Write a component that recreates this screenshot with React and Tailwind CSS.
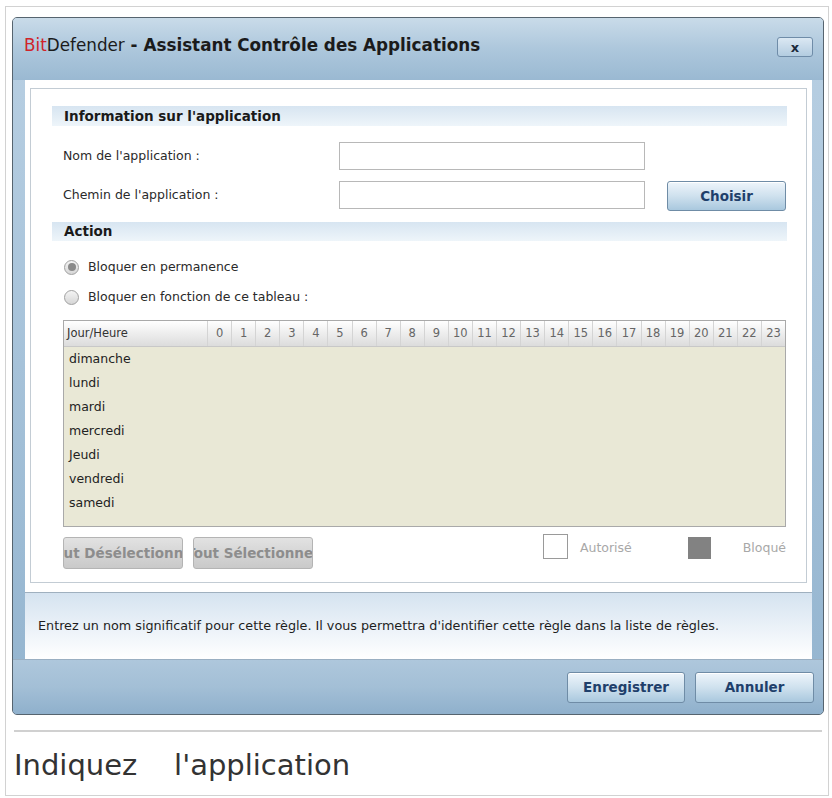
import React from 'react';

const days = ['dimanche', 'lundi', 'mardi', 'mercredi', 'Jeudi', 'vendredi', 'samedi'];
const hours = Array.from({ length: 24 }, (_, i) => i);

function BlueButton({ children, className = '' }) {
  return (
    <button
      className={
        'flex items-center justify-center rounded-[3px] border border-[#6f8ca6] bg-gradient-to-b from-[#eef5fb] via-[#cfe1ee] to-[#a9c8de] text-[13.5px] font-bold text-[#1f3f6b] shadow-[inset_0_1px_0_#ffffff] ' +
        className
      }
    >
      {children}
    </button>
  );
}

function GrayButton({ children }) {
  return (
    <div className="flex h-[32px] w-[120px] items-center justify-center overflow-hidden whitespace-nowrap rounded-[3px] border border-[#b4b4b4] bg-gradient-to-b from-[#e2e2e2] to-[#c9c9c9] text-[13.5px] font-bold text-[#8d8d8d]">
      {children}
    </div>
  );
}

function SectionHeader({ children, className = '' }) {
  return (
    <div
      className={
        'ml-[21px] mr-[19px] flex items-center bg-gradient-to-b from-[#d7e5f1] to-[#eef5fa] pl-[12px] text-[13.5px] font-bold text-[#1a1a1a] ' +
        className
      }
    >
      {children}
    </div>
  );
}

function Radio({ checked, label }) {
  return (
    <div className="flex h-[20px] items-center pl-[33px]">
      <div className="flex h-[15px] w-[15px] items-center justify-center rounded-full border border-[#a0a0a0] bg-gradient-to-b from-[#f4f4f4] to-[#d6d6d6]">
        {checked && <div className="h-[8px] w-[8px] rounded-full bg-[#8a8a8a]" />}
      </div>
      <span className="ml-[9px] text-[12.5px] text-[#2a2a2a]">{label}</span>
    </div>
  );
}

export default function App() {
  return (
    <div className="h-[798px] w-[832px] bg-white pl-[5px] pt-[6px] font-['DejaVu_Sans',sans-serif]">
      <div className="h-[790px] w-[824px] border border-[#d2d2d2] bg-white pl-[6px] pt-[10px]">
        {/* dialog window */}
        <div className="relative flex h-[698px] w-[812px] flex-col overflow-hidden rounded-[5px] border border-[#56646f] bg-gradient-to-b from-[#b9d0e3] to-[#93b4cf]">
          {/* title bar */}
          <div className="h-[62px] bg-gradient-to-b from-[#c9dbe9] via-[#adc7dc] to-[#9ab9d2] pl-[11px] pt-[17px]">
            <div className="text-[16.8px] leading-[20px] text-[#1b1b1b]">
              <span className="text-[#d0232a]">Bit</span>
              <span>Defender</span>
              <span className="font-bold"> - Assistant Contrôle des Applications</span>
            </div>
          </div>
          <div className="absolute right-[10px] top-[19px] flex h-[20px] w-[36px] items-center justify-center rounded-[3px] border border-[#6f8ca8] bg-gradient-to-b from-[#dbe8f3] to-[#b3cce0] text-[13px] font-bold leading-none text-[#1c2a3c]">
            x
          </div>

          {/* white content */}
          <div className="ml-[12px] mr-[11px] h-[512px] bg-white pl-[5px] pr-[5px] pt-[8px]">
            <div className="h-[495px] w-[777px] border border-[#c3ccd4] bg-white pt-[17px]">
              <SectionHeader className="h-[20px]">Information sur l'application</SectionHeader>

              <div className="mt-[16px] flex items-center pl-[32px]">
                <div className="w-[276px] text-[12.5px] text-[#2a2a2a]">Nom de l'application :</div>
                <div className="h-[28px] w-[306px] border border-[#b8b8b8] bg-white" />
              </div>
              <div className="mt-[11px] flex items-start pl-[32px]">
                <div className="flex h-[28px] w-[276px] items-center text-[12.5px] text-[#2a2a2a]">Chemin de l'application :</div>
                <div className="h-[28px] w-[306px] border border-[#b8b8b8] bg-white" />
                <BlueButton className="ml-[22px] h-[30px] w-[119px]">Choisir</BlueButton>
              </div>

              <SectionHeader className="mt-[11px] h-[19px]">Action</SectionHeader>

              <div className="mt-[16px]">
                <Radio checked label="Bloquer en permanence" />
              </div>
              <div className="mt-[10px]">
                <Radio label="Bloquer en fonction de ce tableau :" />
              </div>

              {/* schedule table */}
              <div className="ml-[32px] mt-[13px] h-[207px] w-[723px] border border-[#a9a9a9] bg-[#e9e8d6]">
                <div className="grid h-[26px] grid-cols-[143px_repeat(24,minmax(0,1fr))] border-b border-[#c8c8c8] bg-gradient-to-b from-[#ffffff] to-[#dcdcdc] text-[11.5px] text-[#666666]">
                  <div className="flex items-center pl-[3px] text-[#333333]">Jour/Heure</div>
                  {hours.map(h => (
                    <div key={h} className="flex items-center justify-center border-l border-[#d4d4d4]">
                      {h}
                    </div>
                  ))}
                </div>
                {days.map(d => (
                  <div key={d} className="flex h-[24px] items-center pl-[5px] text-[12.5px] text-[#222222]">
                    {d}
                  </div>
                ))}
              </div>

              {/* buttons + legend */}
              <div className="ml-[32px] mt-[10px] flex w-[723px] items-start">
                <GrayButton>Tout Désélectionner</GrayButton>
                <div className="ml-[10px]">
                  <GrayButton>Tout Sélectionner</GrayButton>
                </div>
                <div className="ml-auto flex items-center">
                  <div className="-mt-[4px] h-[25px] w-[25px] border border-[#9a9a9a] bg-white" />
                  <span className="ml-[12px] text-[12.5px] text-[#a8a8a8]">Autorisé</span>
                  <div className="ml-[56px] h-[22px] w-[23px] bg-[#828282]" />
                  <span className="ml-[32px] text-[12.5px] text-[#a8a8a8]">Bloqué</span>
                </div>
              </div>
            </div>
          </div>

          {/* info area */}
          <div className="ml-[12px] mr-[11px] flex h-[67px] items-center border-t border-[#9fb0bf] bg-gradient-to-b from-[#d5e3f0] to-[#ffffff] pl-[13px] text-[12.75px] text-[#1e1e1e]">
            Entrez un nom significatif pour cette règle. Il vous permettra d'identifier cette règle dans la liste de règles.
          </div>

          {/* bottom bar */}
          <div className="flex flex-1 items-start justify-end border-t border-[#9aafc2] bg-gradient-to-b from-[#aec7dc] via-[#a3bfd6] to-[#8fb0cc] pr-[9px] pt-[12px]">
            <BlueButton className="h-[31px] w-[118px]">Enregistrer</BlueButton>
            <BlueButton className="ml-[10px] h-[31px] w-[119px]">Annuler</BlueButton>
          </div>
        </div>

        <div className="ml-[2px] mt-[15px] h-[2px] w-[808px] bg-[#d0d0d0]" />
        <div className="ml-[2px] mt-[16px] whitespace-pre text-[29px] leading-[34px] text-[#333333]">
          {'Indiquez    l\'application'}
        </div>
      </div>
    </div>
  );
}
